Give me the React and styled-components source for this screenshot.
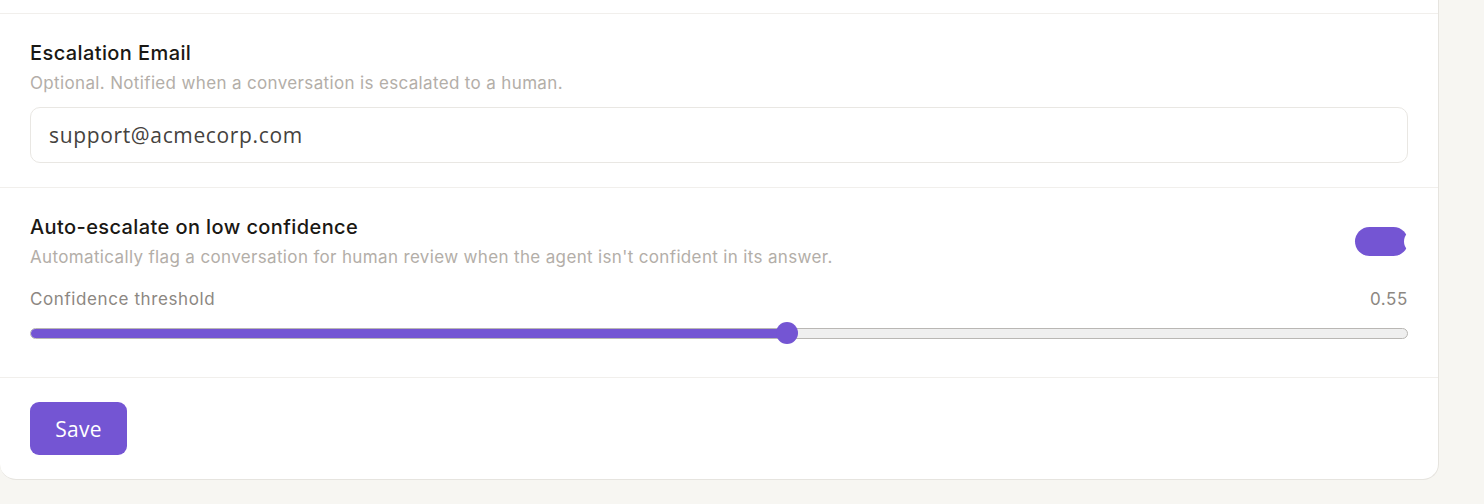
import React, { useState } from "react";
import styled, { createGlobalStyle } from "styled-components";

const GlobalStyle = createGlobalStyle`
  html, body {
    margin: 0;
    padding: 0;
    background: #f7f6f2;
  }
  body {
    font-family: "Inter", "Liberation Sans", sans-serif;
    -webkit-font-smoothing: antialiased;
  }
`;

const Page = styled.div`
  width: 1484px;
  height: 504px;
  overflow: hidden;
  background: #f7f6f2;
`;

const Card = styled.div`
  width: 1438px;
  background: #ffffff;
  border: 1px solid #e6e4df;
  border-top: none;
  border-left: none;
  border-radius: 0 0 16px 16px;
`;

const Section = styled.div`
  padding: ${p => p.$pad};
  border-bottom: ${p => (p.$last ? "none" : "1px solid #f1efec")};
`;

const Title = styled.div`
  font-size: 20px;
  line-height: 24px;
  font-weight: 500;
  color: #1a1814;
  letter-spacing: 0.4px;
`;

const Desc = styled.div`
  margin-top: 7px;
  font-size: 17px;
  line-height: 22px;
  color: #b3aea8;
  letter-spacing: 0.35px;
`;

const EmailInput = styled.input`
  display: block;
  box-sizing: border-box;
  width: 1378px;
  height: 56px;
  margin-top: 13px;
  padding: 0 18px;
  border: 1px solid #e9e7e3;
  border-radius: 10px;
  background: #fff;
  font-family: "Open Sans", "Liberation Sans", sans-serif;
  font-size: 21px;
  letter-spacing: 0.65px;
  color: #45423e;
  outline: none;
`;

const Row = styled.div`
  display: flex;
  align-items: center;
  justify-content: space-between;
  width: 1378px;
`;

const Toggle = styled.button`
  position: relative;
  width: 53px;
  height: 29px;
  padding: 0;
  border: none;
  border-radius: 15px;
  background: #7455d3;
  overflow: visible;
  cursor: pointer;
`;

const Knob = styled.span`
  position: absolute;
  top: 3px;
  left: ${p => (p.$on ? "49px" : "3px")};
  width: 23px;
  height: 23px;
  border-radius: 50%;
  background: #ffffff;
`;

const ThresholdRow = styled(Row)`
  margin-top: 21px;
  font-size: 17px;
  line-height: 20px;
  color: #8c8782;
  letter-spacing: 0.6px;
`;

const Slider = styled.div`
  position: relative;
  width: 1378px;
  height: 22px;
  margin-top: 13px;
  display: flex;
  align-items: center;
`;

const Track = styled.div`
  position: relative;
  width: 100%;
  height: 11px;
  box-sizing: border-box;
  border: 1px solid #b9b7b4;
  border-radius: 6px;
  background: #efefef;
  overflow: hidden;
`;

const Fill = styled.div`
  position: absolute;
  left: -1px;
  top: -1px;
  bottom: -1px;
  background: #7455d3;
  border-radius: 6px 0 0 6px;
`;

const Thumb = styled.div`
  position: absolute;
  top: 0;
  width: 22px;
  height: 22px;
  margin-left: -11px;
  border-radius: 50%;
  background: #7455d3;
`;

const SaveButton = styled.button`
  width: 97px;
  height: 53px;
  border: none;
  border-radius: 9px;
  background: #7455d3;
  color: #ffffff;
  font-family: "Open Sans", "Liberation Sans", sans-serif;
  font-size: 21px;
  font-weight: 500;
  letter-spacing: 0.3px;
  cursor: pointer;
`;

export default function App() {
  const [email, setEmail] = useState("support@acmecorp.com");
  const [autoEscalate, setAutoEscalate] = useState(true);
  const threshold = 0.55;
  const thumbX = 757;

  return (
    <Page>
      <GlobalStyle />
      <Card>
        <Section $pad="13px 0 0 0" />
        <Section $pad="27px 30px 24px 30px">
          <Title>Escalation Email</Title>
          <Desc>Optional. Notified when a conversation is escalated to a human.</Desc>
          <EmailInput value={email} onChange={e => setEmail(e.target.value)} />
        </Section>
        <Section $pad="27px 30px 33px 30px">
          <Row>
            <div>
              <Title>Auto-escalate on low confidence</Title>
              <Desc>
                Automatically flag a conversation for human review when the agent isn't confident in its answer.
              </Desc>
            </div>
            <Toggle onClick={() => setAutoEscalate(!autoEscalate)}>
              <Knob $on={autoEscalate} />
            </Toggle>
          </Row>
          <ThresholdRow>
            <span>Confidence threshold</span>
            <span>{threshold.toFixed(2)}</span>
          </ThresholdRow>
          <Slider>
            <Track>
              <Fill style={{ width: `${thumbX + 1}px` }} />
            </Track>
            <Thumb style={{ left: `${thumbX}px` }} />
          </Slider>
        </Section>
        <Section $pad="24px 30px 24px 30px" $last>
          <SaveButton>Save</SaveButton>
        </Section>
      </Card>
    </Page>
  );
}
